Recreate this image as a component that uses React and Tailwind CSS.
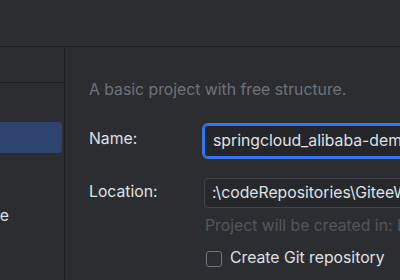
import React from 'react';

export default function App() {
  return (
    <div className="w-[400px] h-[280px] overflow-hidden bg-[#2b2d30] flex flex-col font-['Inter',sans-serif] text-[15.75px]">
      <div className="h-[47px] shrink-0 border-b border-[#1e1f22]" />
      <div className="flex flex-1 min-h-0">
        <div className="w-[65px] shrink-0 border-r border-[#1e1f22] overflow-hidden flex flex-col">
          <div className="h-[36px] shrink-0 border-b border-[#1e1f22]" />
          <div className="mt-[39px] h-[31px] w-[62px] rounded-r-[4px] bg-[#2e436e] flex justify-end items-center pr-2 text-[#dfe1e5] whitespace-nowrap">
            <span className="opacity-0">Empty Project</span>
          </div>
          <div className="mt-[48px] h-[30px] w-[9px] flex justify-end items-center whitespace-nowrap text-[#dfe1e5]">
            Maven Archetype
          </div>
        </div>
        <div className="flex-1 min-w-0 pl-[24px] pt-[32px] flex flex-col">
          <div className="h-[22px] leading-[22px] text-[#6f737a] whitespace-nowrap">A basic project with free structure.</div>
          <div className="mt-[24px] flex items-start">
            <div className="w-[115px] shrink-0 h-[32px] leading-[28px] text-[#dfe1e5]">Name:</div>
            <div className="w-[300px] shrink-0 h-[32px] rounded-[4px] border border-[#3574f0] outline-2 outline-[#3574f0] bg-[#25262a] flex items-center pl-[8px] text-[#dfe1e5] whitespace-nowrap">
              springcloud_alibaba-demo
            </div>
          </div>
          <div className="mt-[21px] flex items-start">
            <div className="w-[115px] shrink-0 h-[30px] leading-[28px] text-[#dfe1e5]">Location:</div>
            <div className="w-[300px] shrink-0 h-[30px] rounded-[4px] border border-[#43454a] bg-[#27282c] flex items-center pl-[7px] text-[#dfe1e5] whitespace-nowrap">
              :\codeRepositories\GiteeWorkspace
            </div>
          </div>
          <div className="mt-[8px] pl-[116px] h-[20px] leading-[20px] text-[#53565c] whitespace-nowrap">
            Project will be created in: D:\codeRepositories
          </div>
          <div className="mt-[13px] pl-[117px] h-[20px] flex items-center gap-[8px] whitespace-nowrap">
            <div className="w-[16px] h-[16px] shrink-0 rounded-[3px] border border-[#6f737a]" />
            <span className="h-[20px] leading-[18px] text-[#dfe1e5]">Create Git repository</span>
          </div>
        </div>
      </div>
    </div>
  );
}
